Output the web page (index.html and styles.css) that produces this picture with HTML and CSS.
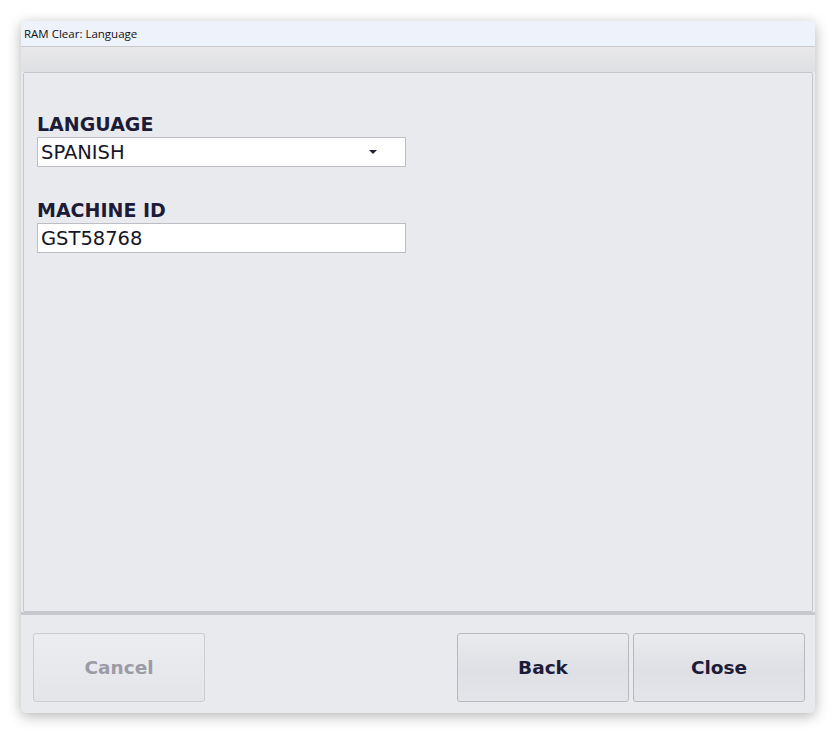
FILE: index.html
```html
<!DOCTYPE html>
<html>
<head>
<meta charset="utf-8">
<link rel="stylesheet" href="styles.css">
</head>
<body>
<div class="window">
  <div class="titlebar">RAM Clear: Language</div>
  <div class="toolbar"></div>
  <div class="panel">
    <div class="field">
      <div class="label">LANGUAGE</div>
      <div class="input select">
        <span>SPANISH</span>
        <svg class="caret" width="8" height="5" viewBox="0 0 8 5"><path d="M0 0 H8 L4 4 Z" fill="#222238"/></svg>
      </div>
    </div>
    <div class="field">
      <div class="label">MACHINE ID</div>
      <div class="input"><span>GST58768</span></div>
    </div>
  </div>
  <div class="footer">
    <div class="btn disabled">Cancel</div>
    <div class="spacer"></div>
    <div class="btn">Back</div>
    <div class="btn">Close</div>
  </div>
</div>
</body>
</html>
```
FILE: styles.css
```css
html, body {
  margin: 0;
  padding: 0;
  background: #ffffff;
}
body {
  padding: 21px 0 0 21px;
  min-height: 735px;
  box-sizing: border-box;
  font-family: "DejaVu Sans", Verdana, sans-serif;
}
.window {
  width: 794px;
  height: 692px;
  background: #e9eaee;
  border-radius: 5px;
  box-shadow: 0 3px 14px rgba(0,0,0,0.3);
  display: flex;
  flex-direction: column;
  overflow: hidden;
  box-sizing: border-box;
}
.titlebar {
  height: 26px;
  background: #eef2fa;
  border-bottom: 1px solid #c9cace;
  font-family: "Open Sans", "Noto Sans", sans-serif;
  font-size: 11.5px;
  color: #111;
  line-height: 25px;
  padding-left: 3px;
  box-sizing: border-box;
  flex: none;
}
.toolbar {
  height: 25px;
  background: linear-gradient(#e8e8ea, #dfe0e3);
  flex: none;
}
.panel {
  height: 540px;
  margin: 0 2px;
  border: 1px solid #c6c7cc;
  border-radius: 2px;
  background: #e9eaee;
  box-sizing: border-box;
  padding: 41px 0 0 13px;
  display: flex;
  flex-direction: column;
  gap: 33px;
  flex: none;
}
.label {
  font-weight: bold;
  font-size: 19px;
  color: #1c1c38;
  line-height: 21px;
  margin-bottom: 2px;
}
.input {
  width: 369px;
  height: 30px;
  background: #fff;
  border: 1px solid #bdbec4;
  box-sizing: border-box;
  display: flex;
  align-items: center;
  justify-content: space-between;
  padding: 0 28px 0 3px;
  font-size: 19.5px;
  color: #161628;
}
.caret { margin-top: 1px; }
.footer {
  flex: 1;
  border-top: 3px solid #c8c9ce;
  display: flex;
  padding: 18px 10px 0 12px;
  gap: 4px;
}
.spacer { flex: 1; }
.btn {
  width: 172px;
  height: 69px;
  box-sizing: border-box;
  border: 1px solid #b8b9be;
  border-radius: 3px;
  background: linear-gradient(#eaebee, #dfe0e5 55%, #e4e5e9);
  display: flex;
  align-items: center;
  justify-content: center;
  font-weight: bold;
  font-size: 18.5px;
  color: #1c1c38;
}
.btn.disabled {
  color: #9b9ba6;
  border-color: #ccccd2;
  background: linear-gradient(#ecedf0, #e4e5e9);
}
```
